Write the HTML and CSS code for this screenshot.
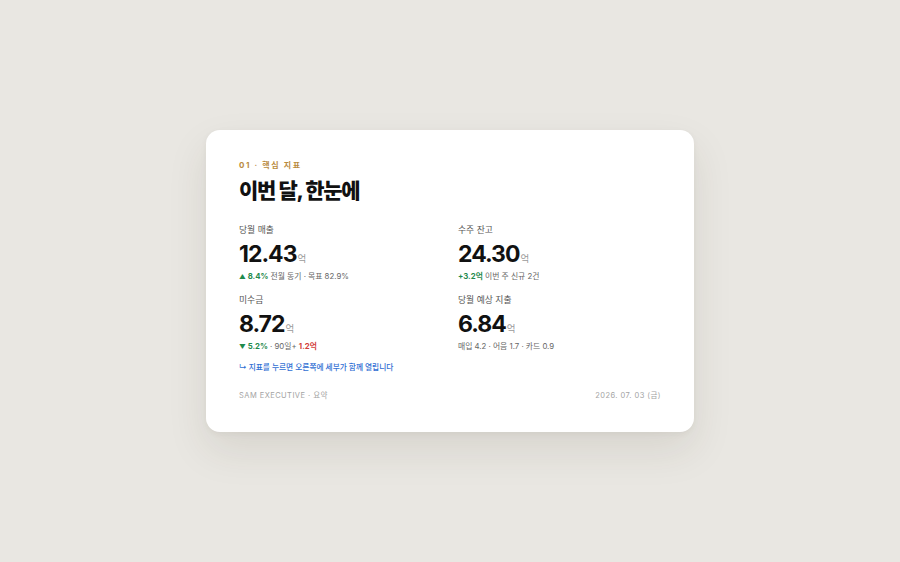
FILE: index.html
```html
<!DOCTYPE html>
<html lang="ko">
<head>
<meta charset="utf-8">
<title>이번 달, 한눈에</title>
<link rel="stylesheet" href="styles.css">
</head>
<body>
<main class="stage">
  <section class="card">
    <div class="eyebrow">01 · 핵심 지표</div>
    <h1 class="title">이번 달, 한눈에</h1>
    <div class="grid">
      <div class="metric">
        <div class="label">당월 매출</div>
        <div class="value">12.43<span class="unit">억</span></div>
        <div class="sub"><span class="up"><span class="tri">▲</span> 8.4%</span> 전월 동기 · 목표 82.9%</div>
      </div>
      <div class="metric">
        <div class="label">수주 잔고</div>
        <div class="value">24.30<span class="unit">억</span></div>
        <div class="sub"><span class="up">+3.2억</span> 이번 주 신규 2건</div>
      </div>
      <div class="metric">
        <div class="label">미수금</div>
        <div class="value">8.72<span class="unit">억</span></div>
        <div class="sub"><span class="up"><span class="tri">▼</span> 5.2%</span> · 90일+ <span class="down">1.2억</span></div>
      </div>
      <div class="metric">
        <div class="label">당월 예상 지출</div>
        <div class="value">6.84<span class="unit">억</span></div>
        <div class="sub">매입 4.2 · 어음 1.7 · 카드 0.9</div>
      </div>
    </div>
    <div class="note">↳ 지표를 누르면 오른쪽에 세부가 함께 열립니다</div>
    <footer class="foot">
      <span>SAM EXECUTIVE · 요약</span>
      <span>2026. 07. 03 (금)</span>
    </footer>
  </section>
</main>
</body>
</html>
```

FILE: styles.css
```css
* { box-sizing: border-box; }
html, body { margin: 0; padding: 0; }
body {
  background: #e9e7e2;
  font-family: "Inter", "Noto Sans CJK KR", sans-serif;
  color: #141414;
}
.stage {
  width: 900px;
  height: 562px;
  display: flex;
  align-items: center;
  justify-content: center;
}
.card {
  width: 488px;
  height: 302px;
  background: #ffffff;
  border-radius: 14px;
  padding: 29px 33px 0 33px;
  box-shadow: 0 18px 40px rgba(60, 50, 30, 0.10), 0 2px 6px rgba(60, 50, 30, 0.05);
}
.eyebrow {
  font-size: 8px;
  font-weight: 700;
  letter-spacing: 1.6px;
  color: #b98b3f;
  line-height: 12px;
}
.title {
  margin: 6px 0 0 0;
  font-size: 21px;
  font-weight: 800;
  letter-spacing: -1.25px;
  line-height: 28px;
  color: #111;
}
.grid {
  margin-top: 19px;
  display: grid;
  grid-template-columns: 1fr 1fr;
  column-gap: 16px;
  row-gap: 12px;
}
.label {
  font-size: 8.8px;
  color: #555;
  line-height: 12px;
}
.value {
  margin-top: 4px;
  font-size: 23px;
  font-weight: 700;
  letter-spacing: -1px;
  line-height: 28px;
  color: #111;
}
.unit {
  font-size: 9.5px;
  font-weight: 400;
  color: #9a9a9a;
  letter-spacing: 0;
  margin-left: 1px;
  line-height: 1;
}
.sub {
  margin-top: 2px;
  font-size: 7.8px;
  color: #666;
  line-height: 12px;
}
.tri {
  font-size: 6.5px;
  line-height: 1;
}
.up { color: #1f8a4d; font-weight: 700; }
.down { color: #d2403a; font-weight: 700; }
.note {
  margin-top: 10px;
  font-size: 7.7px;
  font-weight: 500;
  color: #2f6ed3;
  line-height: 12px;
}
.foot {
  margin-top: 16px;
  display: flex;
  justify-content: space-between;
  font-size: 7.5px;
  color: #a3a3a3;
  letter-spacing: 0.45px;
  line-height: 12px;
}
```
